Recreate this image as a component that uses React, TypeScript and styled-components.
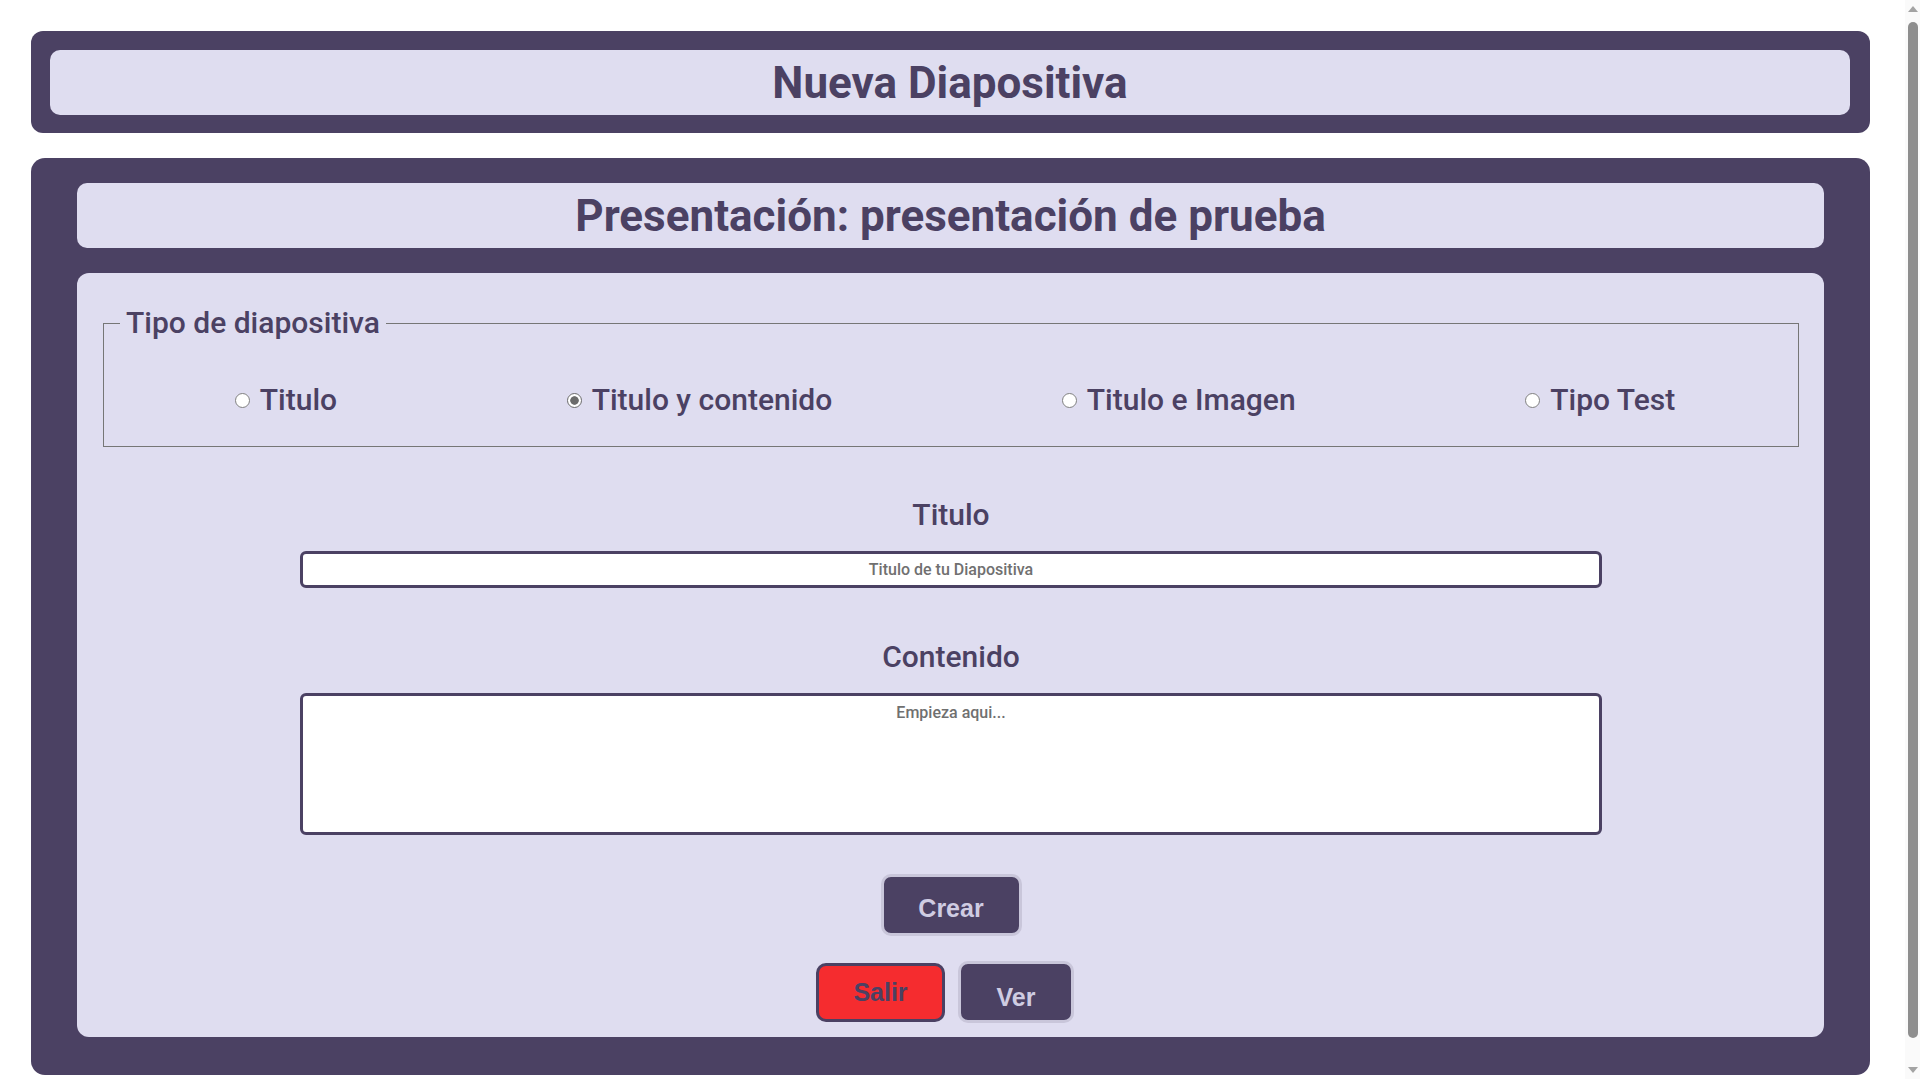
import styled, { createGlobalStyle } from "styled-components";

const purple = "#4b4163";
const lavender = "#dfddf0";

const GlobalStyle = createGlobalStyle`
    html, body {
        margin: 0;
        padding: 0;
        background: #ffffff;
    }
    body {
        font-family: Roboto, "Liberation Sans", sans-serif;
        color: ${purple};
    }
`;

const Page = styled.div`
    padding: 31px 50px 25px 31px;
    display: flex;
    flex-direction: column;
    gap: 25px;
`;

// replica of the browser scrollbar seen at the right edge of the screenshot
const ScrollTrack = styled.div`
    position: fixed;
    top: 0;
    right: 0;
    width: 15px;
    height: 100vh;
    background: #fafafa;
    display: flex;
    flex-direction: column;
    align-items: center;
    justify-content: space-between;
    padding: 6px 0;
    box-sizing: border-box;
`;

const ScrollArrow = styled.span<{ $down?: boolean }>`
    width: 0;
    height: 0;
    border-left: 5px solid transparent;
    border-right: 5px solid transparent;
    ${(p) => (p.$down ? "border-top: 6px solid #a3a3a3;" : "border-bottom: 6px solid #a3a3a3;")}
`;

const ScrollThumb = styled.span`
    flex: 1;
    width: 10px;
    margin: 10px 0 29px;
    border-radius: 5px;
    background: #8e8e8e;
`;

const Panel = styled.section<{ $pad: string; $radius: number }>`
    background: ${purple};
    border-radius: ${(p) => p.$radius}px;
    padding: ${(p) => p.$pad};
    display: flex;
    flex-direction: column;
    gap: 25px;
`;

const TitleBox = styled.div`
    background: ${lavender};
    border-radius: 10px;
    height: 65px;
    display: flex;
    align-items: center;
    justify-content: center;
`;

const Title = styled.h1`
    margin: 0;
    font-family: Roboto, sans-serif;
    font-weight: 700;
    font-size: 44px;
    line-height: 1;
    color: ${purple};
`;

const Card = styled.div`
    background: ${lavender};
    border-radius: 12px;
    padding: 33px 25px 14px 26px;
    display: flex;
    flex-direction: column;
    align-items: center;
`;

const TypeSet = styled.fieldset`
    align-self: stretch;
    margin: 0;
    padding: 0 8px 29px 16px;
    border: 1px solid #767676;
    min-width: 0;
`;

const Legend = styled.legend`
    padding: 0 6px;
    font-size: 30px;
    font-weight: 500;
    line-height: 34px;
    color: ${purple};
`;

const RadioRow = styled.div`
    margin-top: 43px;
    padding-left: 0;
    display: flex;
    justify-content: space-around;
    align-items: center;
`;

const RadioLabel = styled.label`
    display: flex;
    align-items: center;
    gap: 10px;
    font-size: 30px;
    font-weight: 500;
    line-height: 34px;
    color: ${purple};
    cursor: pointer;
`;

const RadioDot = styled.span<{ $checked?: boolean }>`
    width: 15px;
    height: 15px;
    box-sizing: border-box;
    border-radius: 50%;
    border: 1.5px solid ${(p) => (p.$checked ? "#6c6c6c" : "#808080")};
    background: ${(p) =>
        p.$checked
            ? "radial-gradient(circle, #6c6c6c 0 3.9px, #ffffff 4.6px)"
            : "#ffffff"};
    flex-shrink: 0;
`;

const FieldGroup = styled.div<{ $top: number }>`
    margin-top: ${(p) => p.$top}px;
    display: flex;
    flex-direction: column;
    align-items: center;
`;

const FieldLabel = styled.label`
    font-size: 30px;
    font-weight: 500;
    line-height: 35px;
    margin-bottom: 19px;
    color: ${purple};
`;

const TextInput = styled.input`
    width: 1302px;
    height: 37px;
    box-sizing: border-box;
    border: 3px solid ${purple};
    border-radius: 6px;
    background: #ffffff;
    text-align: center;
    font-family: Roboto, sans-serif;
    font-size: 16px;
    font-weight: 500;
    color: #333;
    outline: none;

    &::placeholder {
        color: #707070;
    }
`;

const TextArea = styled.textarea`
    width: 1302px;
    height: 142px;
    box-sizing: border-box;
    border: 3px solid ${purple};
    border-radius: 6px;
    background: #ffffff;
    padding: 7px 10px;
    resize: none;
    text-align: center;
    font-family: Roboto, sans-serif;
    font-size: 16px;
    font-weight: 500;
    line-height: 20px;
    color: #333;
    outline: none;

    &::placeholder {
        color: #707070;
    }
`;

const Button = styled.button<{ $danger?: boolean; $w: number; $h: number; $pt?: number }>`
    width: ${(p) => p.$w}px;
    height: ${(p) => p.$h}px;
    box-sizing: border-box;
    border: 3px solid ${(p) => (p.$danger ? purple : "#c9c6da")};
    border-radius: 10px;
    background: ${(p) => (p.$danger ? "#f52c2f" : purple)};
    color: ${(p) => (p.$danger ? purple : "#cfcce2")};
    font-family: "Liberation Sans", Arial, sans-serif;
    font-weight: 700;
    font-size: 25px;
    padding: ${(p) => p.$pt ?? 0}px 0 0;
    cursor: pointer;
`;

const CreateButton = styled(Button)`
    margin-top: 39px;
`;

const ButtonRow = styled.div`
    margin-top: 25px;
    padding-right: 12px;
    display: flex;
    align-items: flex-start;
    gap: 13px;

    & > button:first-child {
        margin-top: 2px;
    }
`;

const tipos = [
    { label: "Titulo", checked: false },
    { label: "Titulo y contenido", checked: true },
    { label: "Titulo e Imagen", checked: false },
    { label: "Tipo Test", checked: false },
];

export default function App() {
    return (
        <>
            <GlobalStyle />
            <Page>
                <Panel $pad="19px 20px 18px 19px" $radius={12}>
                    <TitleBox>
                        <Title>Nueva Diapositiva</Title>
                    </TitleBox>
                </Panel>

                <Panel $pad="25px 46px 38px 46px" $radius={14}>
                    <TitleBox>
                        <Title>Presentación: presentación de prueba</Title>
                    </TitleBox>

                    <Card>
                        <TypeSet>
                            <Legend>Tipo de diapositiva</Legend>
                            <RadioRow>
                                {tipos.map((t) => (
                                    <RadioLabel key={t.label}>
                                        <RadioDot $checked={t.checked} />
                                        {t.label}
                                    </RadioLabel>
                                ))}
                            </RadioRow>
                        </TypeSet>

                        <FieldGroup $top={50}>
                            <FieldLabel>Titulo</FieldLabel>
                            <TextInput type="text" placeholder="Titulo de tu Diapositiva" />
                        </FieldGroup>

                        <FieldGroup $top={51}>
                            <FieldLabel>Contenido</FieldLabel>
                            <TextArea placeholder="Empieza aqui..." />
                        </FieldGroup>

                        <CreateButton $w={141} $h={62} $pt={6}>Crear</CreateButton>

                        <ButtonRow>
                            <Button $danger $w={129} $h={59}>Salir</Button>
                            <Button $w={116} $h={62} $pt={10}>Ver</Button>
                        </ButtonRow>
                    </Card>
                </Panel>
            </Page>
            <ScrollTrack>
                <ScrollArrow />
                <ScrollThumb />
                <ScrollArrow $down />
            </ScrollTrack>
        </>
    );
}
